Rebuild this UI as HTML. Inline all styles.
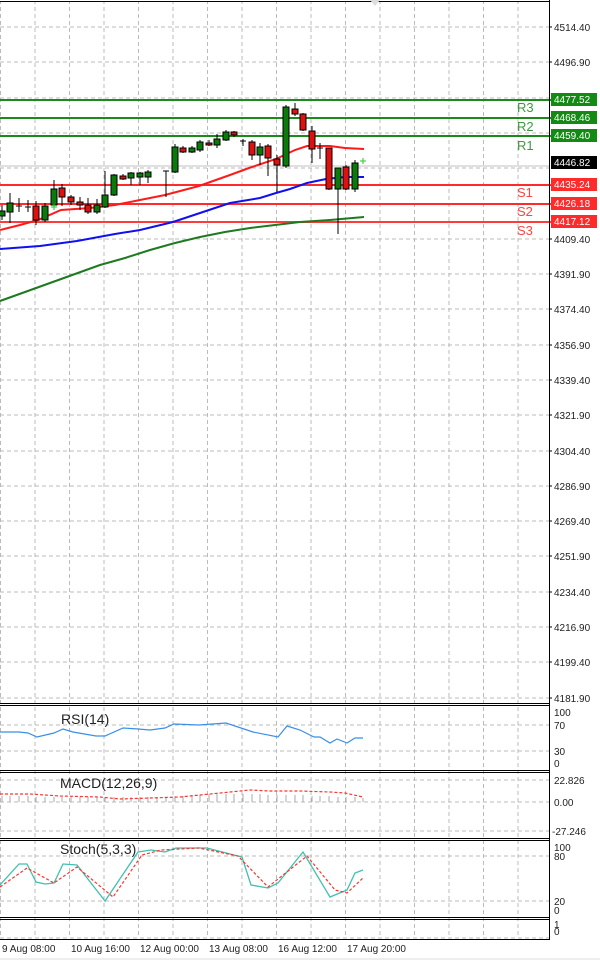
<!DOCTYPE html>
<html><head><meta charset="utf-8"><style>
body{margin:0;background:#fff;width:600px;height:962px;overflow:hidden;font-family:"Liberation Sans",sans-serif}
svg{display:block}
</style></head><body>
<svg width="600" height="962" xmlns="http://www.w3.org/2000/svg" font-family="Liberation Sans, sans-serif">
<defs>
<pattern id="gx" x="0" y="0" width="34.5" height="962" patternUnits="userSpaceOnUse">
<line x1="0.5" y1="0" x2="0.5" y2="962" stroke="#bbb" stroke-dasharray="4,3" stroke-width="1"/>
</pattern>
</defs>
<rect width="600" height="962" fill="#fff"/>
<!-- vertical grid -->
<rect x="0" y="2" width="549" height="936" fill="url(#gx)"/>
<!-- main horizontal grid -->
<g stroke="#bbb" stroke-dasharray="4,3">
<line x1="0" y1="27" x2="549" y2="27"/><line x1="0" y1="62" x2="549" y2="62"/><line x1="0" y1="98" x2="549" y2="98"/><line x1="0" y1="133" x2="549" y2="133"/><line x1="0" y1="168" x2="549" y2="168"/><line x1="0" y1="204" x2="549" y2="204"/><line x1="0" y1="239" x2="549" y2="239"/><line x1="0" y1="274" x2="549" y2="274"/><line x1="0" y1="309" x2="549" y2="309"/><line x1="0" y1="345" x2="549" y2="345"/><line x1="0" y1="380" x2="549" y2="380"/><line x1="0" y1="415" x2="549" y2="415"/><line x1="0" y1="451" x2="549" y2="451"/><line x1="0" y1="486" x2="549" y2="486"/><line x1="0" y1="521" x2="549" y2="521"/><line x1="0" y1="556" x2="549" y2="556"/><line x1="0" y1="592" x2="549" y2="592"/><line x1="0" y1="627" x2="549" y2="627"/><line x1="0" y1="662" x2="549" y2="662"/><line x1="0" y1="698" x2="549" y2="698"/>
<line x1="0" y1="725" x2="549" y2="725"/><line x1="0" y1="751" x2="549" y2="751"/>
<line x1="0" y1="780" x2="549" y2="780"/><line x1="0" y1="802" x2="549" y2="802"/><line x1="0" y1="831" x2="549" y2="831"/>
<line x1="0" y1="856" x2="549" y2="856"/><line x1="0" y1="901" x2="549" y2="901"/>
<line x1="0" y1="938" x2="549" y2="938"/>
</g>
<line x1="0" y1="166" x2="549" y2="166" stroke="#c0c0c0"/>
<!-- pivot lines -->
<g stroke-width="2">
<line x1="0" y1="100" x2="551" y2="100" stroke="#1a8a1a"/>
<line x1="0" y1="118" x2="551" y2="118" stroke="#1a8a1a"/>
<line x1="0" y1="136" x2="551" y2="136" stroke="#1a8a1a"/>
<line x1="0" y1="185" x2="551" y2="185" stroke="#ff2b2b"/>
<line x1="0" y1="204" x2="551" y2="204" stroke="#ff2b2b"/>
<line x1="0" y1="222" x2="551" y2="222" stroke="#ff3b3b"/>
</g>
<g font-size="13" font-family="Liberation Sans, sans-serif">
<text x="517" y="112" fill="#3c9a3c">R3</text><text x="517" y="131" fill="#3c9a3c">R2</text><text x="517" y="150" fill="#3c9a3c">R1</text>
<text x="517" y="197" fill="#ff4444">S1</text><text x="517" y="216" fill="#ff4444">S2</text><text x="517" y="235" fill="#ff4444">S3</text>
</g>
<!-- MAs -->
<polyline fill="none" stroke="#1e7a1e" stroke-width="2" points="0,301 25,292 50,283 75,274 100,265 125,258 150,250 175,243 200,237 225,232 250,228 275,225 300,222 330,220 364,217"/>
<polyline fill="none" stroke="#1010ee" stroke-width="2" points="0,249 40,246 77,241 115,234 140,230 173,222 200,213 230,203 260,198 276,193 290,189 307,183 326,179 345,177 364,177"/>
<polyline fill="none" stroke="#ff1a1a" stroke-width="2" points="0,230 20,225 38,220 61,210 90,208 115,205 140,200 165,195 199,186 230,175 249,168 276,159 295,150 307,146 330,146 345,148 364,149"/>
<!-- candles -->
<g stroke="#000" stroke-width="1">
<line x1="2" y1="205" x2="2" y2="220"/><rect x="-1" y="211" width="6" height="5" fill="#0a7a0a"/>
<line x1="10" y1="193" x2="10" y2="223"/><rect x="7" y="203" width="6" height="9" fill="#0a7a0a"/>
<line x1="19" y1="198" x2="19" y2="212"/><line x1="16" y1="206" x2="22" y2="206"/>
<line x1="28" y1="200" x2="28" y2="212"/><line x1="25" y1="207" x2="31" y2="207"/>
<line x1="36" y1="201" x2="36" y2="225"/><rect x="33" y="206" width="6" height="14" fill="#e01010"/>
<line x1="45" y1="203" x2="45" y2="222"/><rect x="42" y="206" width="6" height="14" fill="#0a7a0a"/>
<line x1="54" y1="180" x2="54" y2="208"/><rect x="51" y="189" width="6" height="16" fill="#0a7a0a"/>
<line x1="62" y1="184" x2="62" y2="206"/><rect x="59" y="188" width="6" height="9" fill="#e01010"/>
<line x1="71" y1="195" x2="71" y2="205"/><rect x="68" y="197" width="6" height="5" fill="#e01010"/>
<line x1="80" y1="197" x2="80" y2="210"/><rect x="77" y="202" width="6" height="3" fill="#e01010"/>
<line x1="88" y1="198" x2="88" y2="214"/><rect x="85" y="205" width="6" height="7" fill="#e01010"/>
<line x1="97" y1="199" x2="97" y2="214"/><rect x="94" y="205" width="6" height="7" fill="#0a7a0a"/>
<line x1="105" y1="171" x2="105" y2="208"/><rect x="102" y="195" width="6" height="12" fill="#0a7a0a"/>
<line x1="114" y1="174" x2="114" y2="196"/><rect x="111" y="175" width="6" height="20" fill="#0a7a0a"/>
<line x1="123" y1="174" x2="123" y2="180"/><rect x="120" y="176" width="6" height="3" fill="#e01010"/>
<line x1="131" y1="172" x2="131" y2="185"/><rect x="128" y="173" width="6" height="5" fill="#0a7a0a"/>
<line x1="140" y1="172" x2="140" y2="185"/><rect x="137" y="173" width="6" height="4" fill="#0a7a0a"/>
<line x1="148" y1="170" x2="148" y2="183"/><rect x="145" y="172" width="6" height="5" fill="#0a7a0a"/>
<line x1="166" y1="171" x2="166" y2="197"/><line x1="163" y1="171" x2="169" y2="171"/>
<line x1="175" y1="144" x2="175" y2="173"/><rect x="172" y="147" width="6" height="25" fill="#0a7a0a"/>
<line x1="183" y1="146" x2="183" y2="153"/><rect x="180" y="148" width="6" height="4" fill="#e01010"/>
<line x1="192" y1="146" x2="192" y2="153"/><rect x="189" y="148" width="6" height="4" fill="#0a7a0a"/>
<line x1="200" y1="140" x2="200" y2="152"/><rect x="197" y="142" width="6" height="8" fill="#0a7a0a"/>
<line x1="209" y1="140" x2="209" y2="146"/><rect x="206" y="143" width="6" height="2" fill="#e01010"/>
<line x1="217" y1="134" x2="217" y2="148"/><rect x="214" y="139" width="6" height="6" fill="#0a7a0a"/>
<line x1="226" y1="130" x2="226" y2="141"/><rect x="223" y="132" width="6" height="8" fill="#0a7a0a"/>
<line x1="234" y1="131" x2="234" y2="137"/><rect x="231" y="132" width="6" height="3" fill="#e01010"/>
<line x1="243" y1="139" x2="243" y2="146"/><line x1="240" y1="141" x2="246" y2="141"/>
<line x1="252" y1="140" x2="252" y2="160"/><rect x="249" y="142" width="6" height="13" fill="#e01010"/>
<line x1="260" y1="143" x2="260" y2="165"/><rect x="257" y="147" width="6" height="8" fill="#0a7a0a"/>
<line x1="268" y1="144" x2="268" y2="176"/><rect x="265" y="146" width="6" height="12" fill="#e01010"/>
<line x1="277" y1="155" x2="277" y2="192"/><rect x="274" y="159" width="6" height="6" fill="#e01010"/>
<line x1="286" y1="105" x2="286" y2="168"/><rect x="283" y="107" width="6" height="59" fill="#0a7a0a"/>
<line x1="295" y1="103" x2="295" y2="116"/><rect x="292" y="109" width="6" height="5" fill="#e01010"/>
<line x1="303" y1="113" x2="303" y2="131"/><rect x="300" y="114" width="6" height="16" fill="#e01010"/>
<line x1="312" y1="126" x2="312" y2="163"/><rect x="309" y="131" width="6" height="18" fill="#e01010"/>
<line x1="320" y1="143" x2="320" y2="159"/><line x1="317" y1="148" x2="323" y2="148"/>
<line x1="329" y1="148" x2="329" y2="190"/><rect x="326" y="148" width="6" height="41" fill="#e01010"/>
<line x1="338" y1="168" x2="338" y2="234"/><rect x="335" y="168" width="6" height="21" fill="#0a7a0a"/>
<line x1="346" y1="165" x2="346" y2="190"/><rect x="343" y="167" width="6" height="22" fill="#e01010"/>
<line x1="355" y1="160" x2="355" y2="192"/><rect x="352" y="163" width="6" height="26" fill="#0a7a0a"/>
</g>
<g stroke="#2c2" stroke-width="1"><line x1="51" y1="207" x2="57" y2="207"/><line x1="54" y1="204" x2="54" y2="210"/><line x1="360" y1="161" x2="366" y2="161"/><line x1="363" y1="158" x2="363" y2="164"/></g>
<!-- panel borders -->
<g stroke="#000" fill="none" stroke-width="1">
<line x1="549.5" y1="0" x2="549.5" y2="940"/>
<line x1="0" y1="1.5" x2="549" y2="1.5"/>
<line x1="0" y1="703.5" x2="549" y2="703.5"/><line x1="0" y1="705.5" x2="549" y2="705.5"/>
<line x1="0" y1="770.5" x2="549" y2="770.5"/><line x1="0" y1="772.5" x2="549" y2="772.5"/>
<line x1="0" y1="838.5" x2="549" y2="838.5"/><line x1="0" y1="840.5" x2="549" y2="840.5"/>
<line x1="0" y1="917.5" x2="549" y2="917.5"/><line x1="0" y1="919.5" x2="549" y2="919.5"/>
<line x1="0" y1="939.5" x2="549" y2="939.5"/>
</g>
<line x1="0" y1="959" x2="600" y2="959" stroke="#ddd"/>
<polygon points="370,0 380,0 375,6" fill="#ddd"/>
<!-- RSI -->
<text x="61" y="724" font-size="14" fill="#222">RSI(14)</text>
<polyline fill="none" stroke="#3a8fe8" stroke-width="1.2" points="0,732 19,732 28,733 37,737 54,733 63,729 73,732 96,736 105,736 123,728 138,729 150,730 165,728 174,724 199,725 226,723 253,732 278,737 287,726 300,730 314,737 320,737 330,743 337,739 347,743 355,738 363,738"/>
<!-- MACD -->
<text x="60" y="788" font-size="14" fill="#222">MACD(12,26,9)</text>
<g stroke="#aaa" stroke-width="1">
<path d="M2 796v6M10 796v6M19 796v6M28 796v6M36 797v5M45 797v5M54 797v5M62 797v5M71 797v5M80 797v5M88 797v5M97 797v5M105 797v5M114 797v5M123 797v5M131 797v5M140 797v5M148 797v5M157 797v5M166 797v5M175 796v6M183 796v6M192 795v7M200 795v7M209 794v8M217 794v8M226 794v8M234 794v8M243 794v8M252 794v8M260 794v8M268 795v7M277 795v7M286 795v7M295 795v7M303 795v7M312 796v6M320 796v6M329 796v6M338 797v5M346 797v5M355 797v5M363 798v4"/>
</g>
<polyline fill="none" stroke="#f33" stroke-width="1.2" stroke-dasharray="3,2" points="0,794 30,794 60,796 100,797 120,799 180,797 200,795 230,792 250,790 270,791 300,791 330,792 345,793 363,797"/>
<!-- Stoch -->
<text x="60" y="854" font-size="14" fill="#222">Stoch(5,3,3)</text>
<polyline fill="none" stroke="#40c0b0" stroke-width="1.3" points="0,885 19,864 27,864 36,882 45,884 54,883 63,864 77,865 105,901 138,852 151,850 165,852 176,848 207,848 230,854 242,857 251,885 268,888 278,883 303,852 330,897 347,890 355,873 363,870"/>
<polyline fill="none" stroke="#f33" stroke-width="1.2" stroke-dasharray="3,2" points="0,887 27,868 54,883 77,867 113,897 142,855 161,850 199,848 238,856 268,887 307,856 335,890 347,893 363,878"/>
<!-- axis labels -->
<g font-size="10" fill="#222">
<text x="554" y="31">4514.40</text><text x="554" y="66">4496.90</text>
<text x="554" y="243">4409.40</text><text x="554" y="278">4391.90</text><text x="554" y="313">4374.40</text><text x="554" y="349">4356.90</text><text x="554" y="384">4339.40</text><text x="554" y="419">4321.90</text><text x="554" y="455">4304.40</text><text x="554" y="490">4286.90</text><text x="554" y="525">4269.40</text><text x="554" y="560">4251.90</text><text x="554" y="596">4234.40</text><text x="554" y="631">4216.90</text><text x="554" y="666">4199.40</text><text x="554" y="702">4181.90</text>
<text x="554" y="716">100</text><text x="554" y="729">70</text><text x="554" y="755">30</text><text x="554" y="767">0</text>
<text x="554" y="784">22.826</text><text x="554" y="806">0.00</text><text x="552" y="835">-27.246</text>
<text x="554" y="851">100</text><text x="554" y="860">80</text><text x="554" y="905">20</text><text x="554" y="914">0</text>
<text x="554" y="928">1</text><text x="554" y="935">0</text>
<text x="2" y="952">9 Aug 08:00</text><text x="71" y="952">10 Aug 16:00</text><text x="140" y="952">12 Aug 00:00</text><text x="209" y="952">13 Aug 08:00</text><text x="278" y="952">16 Aug 12:00</text><text x="347" y="952">17 Aug 20:00</text>
</g>
<g stroke="#000"><path d="M549 27h3M549 62h3M549 239h3M549 274h3M549 309h3M549 345h3M549 380h3M549 415h3M549 451h3M549 486h3M549 521h3M549 556h3M549 592h3M549 627h3M549 662h3M549 698h3"/></g>
<!-- price boxes -->
<g font-size="10">
<rect x="551" y="93" width="46" height="13" fill="#138a13"/><text x="554" y="103" fill="#fff">4477.52</text>
<rect x="551" y="111" width="46" height="13" fill="#138a13"/><text x="554" y="121" fill="#fff">4468.46</text>
<rect x="551" y="129" width="46" height="13" fill="#138a13"/><text x="554" y="139" fill="#fff">4459.40</text>
<rect x="551" y="156" width="46" height="13" fill="#000"/><text x="554" y="166" fill="#fff">4446.82</text>
<rect x="551" y="178" width="46" height="13" fill="#ff2b2b"/><text x="554" y="188" fill="#fff">4435.24</text>
<rect x="551" y="197" width="46" height="13" fill="#ff2b2b"/><text x="554" y="207" fill="#fff">4426.18</text>
<rect x="551" y="215" width="46" height="13" fill="#ff2b2b"/><text x="554" y="225" fill="#fff">4417.12</text>
</g>
</svg>
</body></html>
